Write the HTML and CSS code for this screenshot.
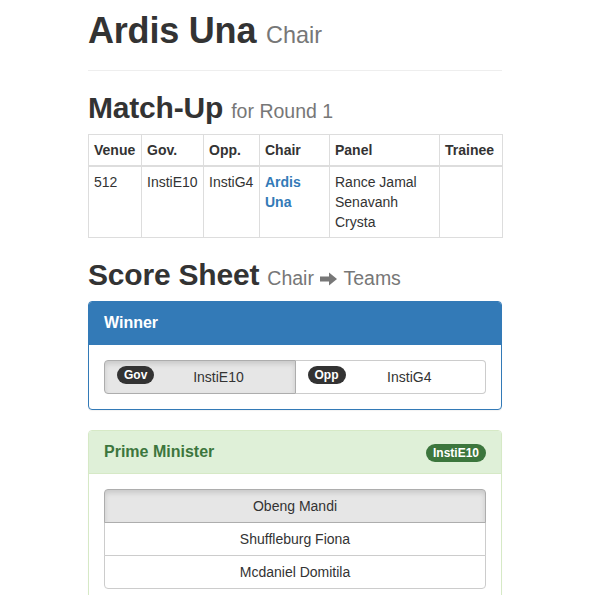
FILE: index.html
```html
<!DOCTYPE html>
<html>
<head>
<meta charset="utf-8">
<link rel="stylesheet" href="styles.css">
</head>
<body>
<div class="wrap">
  <div class="page-header">
    <h1>Ardis Una <small>Chair</small></h1>
  </div>

  <h2>Match-Up <small>for Round 1</small></h2>
  <table class="table">
    <colgroup>
      <col class="c1"><col class="c2"><col class="c3"><col class="c4"><col class="c5"><col class="c6">
    </colgroup>
    <thead>
      <tr><th>Venue</th><th>Gov.</th><th>Opp.</th><th>Chair</th><th>Panel</th><th>Trainee</th></tr>
    </thead>
    <tbody>
      <tr>
        <td>512</td>
        <td>InstiE10</td>
        <td>InstiG4</td>
        <td><a class="chair-link" href="#">Ardis Una</a></td>
        <td>Rance Jamal<br>Senavanh<br>Crysta</td>
        <td></td>
      </tr>
    </tbody>
  </table>

  <h2>Score Sheet <small>Chair <svg class="arrow" width="17" height="14" viewBox="0 0 17 14"><path d="M0 4.6h9V0.5l8 6.5-8 6.5V9.4H0z" fill="#777"/></svg> Teams</small></h2>

  <div class="panel panel-primary">
    <div class="panel-heading">Winner</div>
    <div class="panel-body">
      <div class="btn-group">
        <div class="btn active"><span class="badge">Gov</span><span class="btn-text">InstiE10</span></div>
        <div class="btn"><span class="badge">Opp</span><span class="btn-text">InstiG4</span></div>
      </div>
    </div>
  </div>

  <div class="panel panel-success">
    <div class="panel-heading">Prime Minister <span class="badge badge-success">InstiE10</span></div>
    <div class="panel-body">
      <div class="btn-vertical">
        <div class="vbtn active">Obeng Mandi</div>
        <div class="vbtn">Shuffleburg Fiona</div>
        <div class="vbtn">Mcdaniel Domitila</div>
      </div>
    </div>
  </div>
</div>
</body>
</html>
```

FILE: styles.css
```css
* { box-sizing: border-box; }
html, body { margin: 0; padding: 0; background: #fff; }
body {
  font-family: "Liberation Sans", Arial, sans-serif;
  font-size: 14px;
  line-height: 1.42857143;
  color: #333;
}
.wrap {
  width: 414px;
  margin-left: 88px;
  padding-top: 1px;
}
h1, h2 {
  font-weight: 700;
  line-height: 1.1;
  color: #333;
  margin: 20px 0 10px;
  letter-spacing: -0.2px;
}
h1 { font-size: 36px; }
h2 { font-size: 30px; }
h1 small, h2 small {
  font-weight: 400;
  color: #777;
  font-size: 65%;
  line-height: 1;
  letter-spacing: 0;
}
.page-header {
  margin: -10px 0 20px;
  padding-bottom: 9px;
  border-bottom: 1px solid #eee;
}
.page-header h1 { margin-top: 20px; }
.arrow { vertical-align: -1px; margin: 0 1px; }

.table {
  width: 414px;
  table-layout: fixed;
  border-collapse: collapse;
  border-spacing: 0;
  margin-bottom: 20px;
}
.c1 { width: 53px; }
.c2 { width: 62px; }
.c3 { width: 56px; }
.c4 { width: 70px; }
.c5 { width: 110px; }
.c6 { width: 63px; }
.table th, .table td {
  border: 1px solid #ddd;
  padding: 5px;
  text-align: left;
  vertical-align: top;
  line-height: 20px;
}
.table th { font-weight: 700; vertical-align: bottom; border-bottom-width: 2px; }
.chair-link { color: #337ab7; font-weight: 700; text-decoration: none; }

.panel {
  border: 1px solid transparent;
  border-radius: 4px;
  margin-bottom: 20px;
  background: #fff;
  box-shadow: 0 1px 1px rgba(0,0,0,.05);
}
.panel-heading {
  padding: 10px 15px;
  border-bottom: 1px solid transparent;
  border-radius: 3px 3px 0 0;
  font-size: 16px;
  font-weight: 700;
  line-height: 22px;
}
.panel-body { padding: 15px; }
.panel-primary { border-color: #337ab7; }
.panel-primary > .panel-heading { background: #337ab7; color: #fff; border-color: #337ab7; }
.panel-success { border-color: #d6e9c6; }
.panel-success > .panel-heading { background: #dff0d8; color: #3c763d; border-color: #d6e9c6; }

.badge {
  display: inline-block;
  min-width: 10px;
  padding: 3px 7px;
  font-size: 12px;
  font-weight: 700;
  line-height: 1;
  color: #fff;
  background: #333;
  border-radius: 10px;
  white-space: nowrap;
}
.badge-success {
  float: right;
  background: #3c763d;
  margin-top: 3px;
}

.btn-group {
  display: flex;
}
.btn {
  flex: 1 1 0;
  display: flex;
  align-items: flex-start;
  padding: 6px 12px;
  border: 1px solid #ccc;
  background: #fff;
  color: #333;
  font-size: 14px;
  line-height: 20px;
}
.btn:first-child { border-radius: 4px 0 0 4px; }
.btn:last-child { border-radius: 0 4px 4px 0; border-left: 0; }
.btn .badge { position: relative; top: -1px; margin-top: 0; }
.btn-text { flex: 1; text-align: center; }
.active {
  background: #e6e6e6;
  border-color: #adadad;
  box-shadow: inset 0 3px 5px rgba(0,0,0,.125);
}

.btn-vertical { display: flex; flex-direction: column; }
.vbtn {
  padding: 6px 12px;
  border: 1px solid #ccc;
  background: #fff;
  text-align: center;
  line-height: 20px;
  margin-top: -1px;
}
.vbtn:first-child { margin-top: 0; border-radius: 4px 4px 0 0; }
.vbtn:last-child { border-radius: 0 0 4px 4px; }
.vbtn.active { background: #e6e6e6; border-color: #adadad; position: relative; }
```
